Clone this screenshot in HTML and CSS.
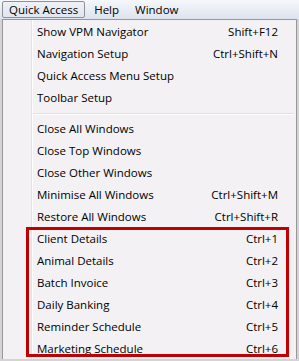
FILE: index.html
```html
<!DOCTYPE html>
<html lang="en">
<head>
  <meta charset="UTF-8">
  <title>Quick Access</title>
  <link rel="stylesheet" href="styles.css">
</head>
<body>
  <div class="menubar">
    <span class="mb-item active">Quick Access</span>
    <span class="mb-item">Help</span>
    <span class="mb-item">Window</span>
  </div>

  <div class="menu">
    <div class="row"><span>Show VPM Navigator</span><span>Shift+F12</span></div>
    <div class="row"><span>Navigation Setup</span><span>Ctrl+Shift+N</span></div>
    <div class="row"><span>Quick Access Menu Setup</span></div>
    <div class="row"><span>Toolbar Setup</span></div>
    <div class="sep"></div>
    <div class="row"><span>Close All Windows</span></div>
    <div class="row"><span>Close Top Windows</span></div>
    <div class="row"><span>Close Other Windows</span></div>
    <div class="row"><span>Minimise All Windows</span><span>Ctrl+Shift+M</span></div>
    <div class="row"><span>Restore All Windows</span><span>Ctrl+Shift+R</span></div>
    <div class="group">
      <div class="row"><span>Client Details</span><span>Ctrl+1</span></div>
      <div class="row"><span>Animal Details</span><span>Ctrl+2</span></div>
      <div class="row"><span>Batch Invoice</span><span>Ctrl+3</span></div>
      <div class="row"><span>Daily Banking</span><span>Ctrl+4</span></div>
      <div class="row"><span>Reminder Schedule</span><span>Ctrl+5</span></div>
      <div class="row"><span>Marketing Schedule</span><span>Ctrl+6</span></div>
    </div>
  </div>
</body>
</html>
```

FILE: styles.css
```css
body {
  margin: 0;
  background-color: #d4d4d4;
  font-family: "Open Sans", "Noto Sans", sans-serif;
  font-size: 11.5px;
  color: #000;
  height: 361px;
  overflow: hidden;
}

.menubar {
  display: flex;
  align-items: center;
  height: 19px;
  padding-left: 2px;
  background: linear-gradient(#f5f7fb, #dde3ee);
}

.mb-item {
  height: 15px;
  line-height: 16px;
  padding: 0 6px;
  border: 1px solid transparent;
  border-radius: 2px;
}

.mb-item + .mb-item {
  margin-left: 2px;
}

.mb-item.active {
  border-color: #8e9195;
  background: linear-gradient(#eef1f6, #e1e6ee);
}

.menu {
  margin-left: 2px;
  width: 293px;
  border: 1px solid #979797;
  border-bottom: none;
  background-color: #f3f1f4;
  background-image: linear-gradient(to right, transparent 28px, #e2e3e3 28px, #e2e3e3 29px, #fff 29px, #fff 30px, transparent 30px);
}

.row {
  display: flex;
  justify-content: space-between;
  height: 22px;
  line-height: 23px;
  overflow: hidden;
  padding: 0 18px 0 34px;
  white-space: nowrap;
}

.sep {
  height: 0;
  margin: 5px 2px 2px 30px;
  border-top: 1px solid #e0e0e0;
  border-bottom: 1px solid #fff;
}

.group {
  position: relative;
}

/* red highlight drawn over the shortcut rows */
.group::after {
  content: "";
  position: absolute;
  top: 0;
  bottom: 2px;
  left: 23px;
  width: 263px;
  border: 3px solid #c00000;
  box-sizing: border-box;
  pointer-events: none;
}
```
